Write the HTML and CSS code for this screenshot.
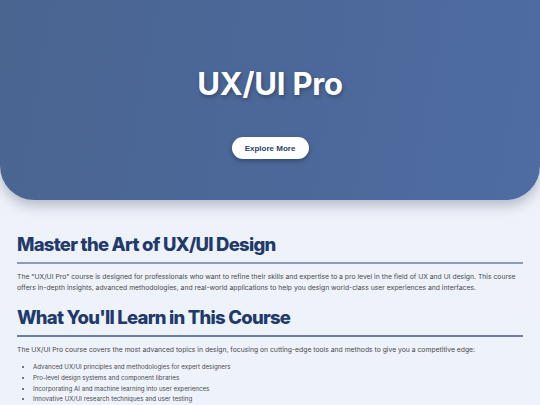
FILE: index.html
```html
<!DOCTYPE html>
<html lang="en">
<head>
<meta charset="utf-8">
<title>UX/UI Pro</title>
<link rel="stylesheet" href="styles.css">
</head>
<body>
<header class="hero">
  <h1 class="hero-title">UX/UI Pro</h1>
  <a class="hero-btn" href="#">Explore More</a>
</header>
<main class="content">
  <section class="section">
    <h2 class="section-title">Master the Art of UX/UI Design</h2>
    <p class="text">The "UX/UI Pro" course is designed for professionals who want to refine their skills and expertise to a pro level in the field of UX and UI design. This course offers in-depth insights, advanced methodologies, and real-world applications to help you design world-class user experiences and interfaces.</p>
  </section>
  <section class="section">
    <h2 class="section-title dark">What You'll Learn in This Course</h2>
    <p class="text">The UX/UI Pro course covers the most advanced topics in design, focusing on cutting-edge tools and methods to give you a competitive edge:</p>
    <ul class="list">
      <li>Advanced UX/UI principles and methodologies for expert designers</li>
      <li>Pro-level design systems and component libraries</li>
      <li>Incorporating AI and machine learning into user experiences</li>
      <li>Innovative UX/UI research techniques and user testing</li>
    </ul>
  </section>
</main>
</body>
</html>
```
FILE: styles.css
```css
* { box-sizing: border-box; }
html, body { margin: 0; padding: 0; }
body {
  background: linear-gradient(180deg, #eef1f7 0%, #eef2fa 100%);
  font-family: Inter, "Noto Sans", sans-serif;
  color: #4a4a4a;
  min-height: 405px;
  overflow: hidden;
}
.hero {
  height: 200px;
  background: linear-gradient(100deg, #4a6590 0%, #4c689a 55%, #4f6ca3 100%);
  border-radius: 0 0 34px 34px;
  box-shadow: 0 6px 12px rgba(40, 55, 90, 0.28);
  display: flex;
  flex-direction: column;
  align-items: center;
  padding-top: 64px;
}
.hero-title {
  margin: 0;
  font-family: Inter, sans-serif;
  font-weight: 700;
  font-size: 31px;
  line-height: 40px;
  color: #ffffff;
  letter-spacing: -0.2px;
  text-shadow: 1px 2px 4px rgba(0, 0, 0, 0.3);
}
.hero-btn {
  margin-top: 33px;
  width: 77px;
  height: 22px;
  border-radius: 11px;
  background: #ffffff;
  color: #2a3f6a;
  font-family: "Liberation Sans", Arial, sans-serif;
  font-weight: 700;
  font-size: 8px;
  display: flex;
  align-items: center;
  justify-content: center;
  text-decoration: none;
  box-shadow: 0 2px 5px rgba(0, 0, 0, 0.3);
}
.content {
  padding: 31px 17px 0 17px;
}
.section-title {
  margin: 0;
  font-family: Inter, sans-serif;
  font-weight: 800;
  font-size: 18.5px;
  line-height: 26px;
  color: #1f3a6b;
  padding-bottom: 5px;
  border-bottom: 2px solid #8e9bb7;
  letter-spacing: -0.75px;
}
.section-title.dark { border-bottom-color: #6c7fa2; }
.text {
  margin: 7px 0 0 0;
  font-size: 6.8px;
  line-height: 11px;
  color: #4a4a4a;
}
.section + .section { margin-top: 11px; }
.list {
  margin: 7px 0 0 0;
  padding-left: 16px;
  font-size: 6.2px;
  line-height: 10.8px;
  color: #4a4a4a;
}
.list li { height: 10.8px; }
```
